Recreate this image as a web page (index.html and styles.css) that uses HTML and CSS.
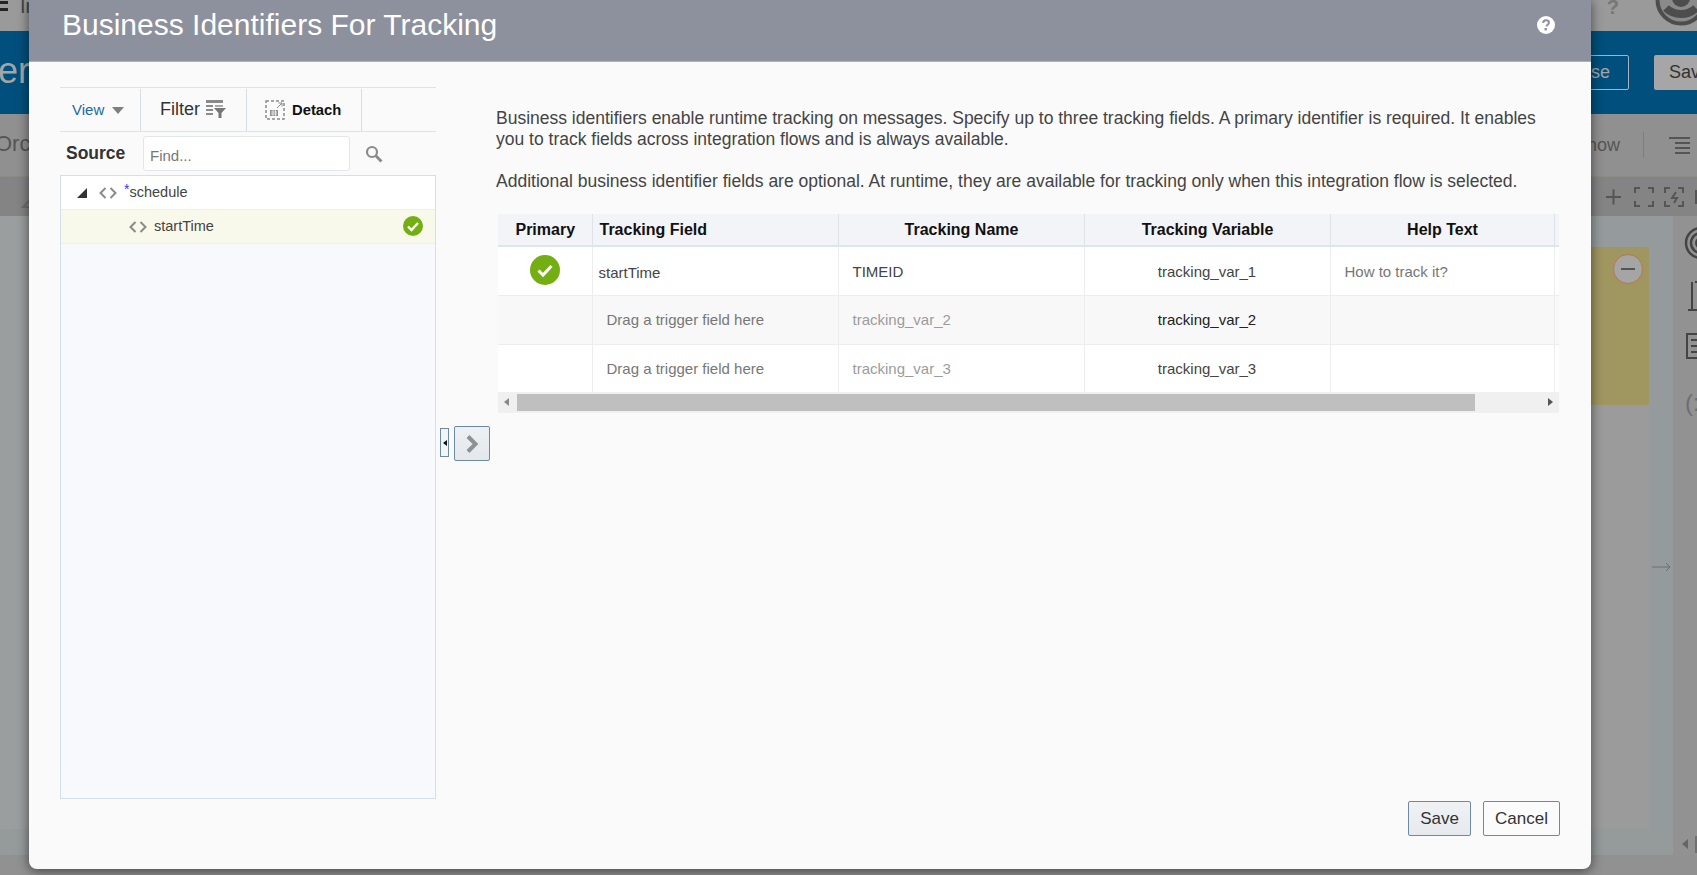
FILE: index.html
```html
<!DOCTYPE html>
<html lang="en">
<head>
<meta charset="utf-8">
<title>Business Identifiers For Tracking</title>
<link rel="stylesheet" href="styles.css">
</head>
<body>
<div class="app">
  <div class="topbar">
    <span class="burger"></span><span class="top-title">In</span>
    <span class="top-spacer"></span>
    <span class="top-help">?</span>
    <svg class="avatar" width="52" height="30" viewBox="0 0 52 30"><circle cx="26" cy="0" r="23.500" fill="#8a8a8a" stroke="#4d4d4d" stroke-width="4"/><circle cx="26" cy="-2" r="9" fill="#4d4d4d"/><path d="M11 8c4 4 9 6 15 6s11-2 15-6" fill="none" stroke="#4d4d4d" stroke-width="8"/></svg>
  </div>
  <div class="bluebar">
    <span class="blue-title">er</span>
    <span class="top-spacer"></span>
    <span class="btn-close">Close</span>
    <span class="btn-save">Save</span>
  </div>
  <div class="toolbar">
    <span class="orch">Orch</span>
    <span class="top-spacer"></span>
    <span class="show">Show</span>
    <span class="vsep"></span>
    <svg class="lines" width="21" height="17" viewBox="0 0 21 17"><path d="M0 1h21M6 6h15M6 11h15M6 16h15" stroke="#555" stroke-width="2" fill="none"/></svg>
  </div>
  <div class="subbar">
    <svg class="warn" width="20" height="24" viewBox="0 0 20 24"><path d="M22 2L2 22h20" fill="none" stroke="#6e6e6e" stroke-width="2"/></svg>
    <span class="top-spacer"></span>
    <svg class="zoom-tools" width="97" height="22" viewBox="0 0 97 22"><path d="M6 11h15M13.500 3.500v15" stroke="#555" stroke-width="2" fill="none"/><path d="M35 7V2h5M48 2h5v5M53 15v5h-5M40 20h-5v-5M65 7V2h5M78 2h5v5M83 15v5h-5M70 20h-5v-5M76 6l-4 6h5l-3 5" stroke="#555" stroke-width="2" fill="none"/><path d="M96 4v14" stroke="#555" stroke-width="2"/></svg>
  </div>
  <div class="canvas">
    <div class="card"><span class="collapse"><span class="collapse-bar"></span></span></div>
    <div class="rail"></div>
    <svg class="rail-icons" width="24" height="150" viewBox="0 0 24 150"><circle cx="28" cy="24" r="15" fill="none" stroke="#444" stroke-width="2.500"/><circle cx="28" cy="24" r="10" fill="none" stroke="#444" stroke-width="2.500"/><circle cx="28" cy="24" r="5" fill="none" stroke="#444" stroke-width="2"/><path d="M19 63v28M15 91h9M22 63h2" stroke="#444" stroke-width="2" fill="none"/><path d="M24 139H14v-24h10M18 121h6M18 127h6M18 133h6" stroke="#444" stroke-width="2" fill="none"/></svg>
    <span class="paren">(:</span>
    <svg class="arrow" width="20" height="10" viewBox="0 0 20 10"><path d="M0 5h18M14 1l4 4-4 4" stroke="#6e6e6e" stroke-width="1" fill="none"/></svg>
    <div class="canvas-foot"></div>
    <svg class="foot-arrow" width="14" height="14" viewBox="0 0 14 14"><path d="M9 2v10L3 7z" fill="#666"/></svg>
    <span class="foot-thumb"></span>
  </div>
</div>

<div class="modal">
  <header class="modal-head">
    <h1 class="modal-title">Business Identifiers For Tracking</h1>
    <svg class="help-icon" width="18" height="18" viewBox="0 0 18 18"><circle cx="9" cy="9" r="9" fill="#fff"/><path d="M6.200 7c0-1.700 1.200-2.700 2.900-2.700 1.600 0 2.800 1 2.800 2.400 0 2-2.400 2-2.400 3.800" fill="none" stroke="#8d909d" stroke-width="2"/><rect x="7.500" y="12" width="2.400" height="2.400" fill="#8d909d"/></svg>
  </header>
  <div class="modal-body">
    <aside class="source-pane">
      <div class="pane-toolbar">
        <div class="tb-cell tb-view"><span class="view-link">View</span><span class="caret"></span></div>
        <div class="tb-cell tb-filter"><span>Filter</span>
          <svg width="22" height="20" viewBox="0 0 22 20"><path d="M1 1h17v3H1zM1 6h7v2H1zM1 10h7v2H1zM1 14h7v2H1z" fill="#8a8a8a"/><path d="M10 6h8v2h-8z" fill="#a9a9a9"/><path d="M9 9h12l-4.500 5v5h-3v-5z" fill="#777"/></svg>
        </div>
        <div class="tb-cell tb-detach">
          <svg width="20" height="20" viewBox="0 0 20 20"><path d="M1 1h18v18H1z" fill="none" stroke="#8a8a8a" stroke-width="1.500" stroke-dasharray="3 2"/><path d="M5 10h8v6H5z" fill="#8f8f8f"/><path d="M6 12h6M6 14h6M8 10v6M10.500 10v6" stroke="#fafafa" stroke-width=".7"/><path d="M12 8l5-5M13.500 3H17v3.500" fill="none" stroke="#8a8a8a"/></svg>
          <span>Detach</span></div>
      </div>
      <div class="source-row">
        <span class="source-label">Source</span>
        <input class="find" type="text" placeholder="Find...">
        <svg class="search" width="18" height="18" viewBox="0 0 18 18"><circle cx="7" cy="7" r="5" fill="none" stroke="#8b8b8b" stroke-width="2.200"/><path d="M10.800 10.800l5.700 5.700" stroke="#8b8b8b" stroke-width="3"/></svg>
      </div>
      <div class="tree">
        <div class="tree-row tree-root">
          <svg class="expander" width="12" height="12" viewBox="0 0 12 12"><path d="M11 1v10H1z" fill="#333"/></svg>
          <svg class="code" width="18" height="12" viewBox="0 0 18 12"><path d="M6.500 1L1.500 6l5 5M11.500 1l5 5-5 5" fill="none" stroke="#8b8b8b" stroke-width="2"/></svg>
          <span class="tree-label"><sup class="req">*</sup>schedule</span>
        </div>
        <div class="tree-row tree-child">
          <svg class="code" width="18" height="12" viewBox="0 0 18 12"><path d="M6.500 1L1.500 6l5 5M11.500 1l5 5-5 5" fill="none" stroke="#8b8b8b" stroke-width="2"/></svg>
          <span class="tree-label">startTime</span>
          <svg class="check-small" width="20" height="20" viewBox="0 0 20 20"><circle cx="10" cy="10" r="10" fill="#73ae12"/><path d="M5 10.500l3.500 3.500L15 7" fill="none" stroke="#fff" stroke-width="2.400"/></svg>
        </div>
      </div>
    </aside>
    <div class="splitter">
      <span class="split-toggle"><span class="split-caret"></span></span>
      <span class="move-btn"><svg width="14" height="20" viewBox="0 0 14 20"><path d="M3 2.500L10.500 10 3 17.500" fill="none" stroke="#8b9196" stroke-width="4"/></svg></span>
    </div>
    <section class="main-pane">
      <p class="intro">Business identifiers enable runtime tracking on messages. Specify up to three tracking fields. A primary identifier is required. It enables you to track fields across integration flows and is always available.</p>
      <p class="intro">Additional business identifier fields are optional. At runtime, they are available for tracking only when this integration flow is selected.</p>
      <div class="grid-wrap">
        <table class="grid">
          <colgroup><col class="c1"><col class="c2"><col class="c3"><col class="c4"><col class="c5"><col class="c6"></colgroup>
          <thead>
            <tr><th>Primary</th><th class="left">Tracking Field</th><th>Tracking Name</th><th>Tracking Variable</th><th>Help Text</th><th class="tail"></th></tr>
          </thead>
          <tbody>
            <tr class="first">
              <td class="center"><svg class="check-big" width="30" height="30" viewBox="0 0 30 30"><circle cx="15" cy="15" r="15" fill="#73ae12"/><path d="M8.500 15.500l4.500 4.500 8.500-9" fill="none" stroke="#fff" stroke-width="3"/></svg></td>
              <td class="dark field-set">startTime</td>
              <td class="dark name-cell">TIMEID</td>
              <td class="dark var-cell">tracking_var_1</td>
              <td class="muted help-cell">How to track it?</td>
              <td class="tail"></td>
            </tr>
            <tr class="alt">
              <td></td>
              <td class="muted field-empty">Drag a trigger field here</td>
              <td class="faint name-cell">tracking_var_2</td>
              <td class="black var-cell">tracking_var_2</td>
              <td></td>
              <td class="tail"></td>
            </tr>
            <tr>
              <td></td>
              <td class="muted field-empty">Drag a trigger field here</td>
              <td class="faint name-cell">tracking_var_3</td>
              <td class="dark var-cell">tracking_var_3</td>
              <td></td>
              <td class="tail"></td>
            </tr>
          </tbody>
        </table>
        <div class="hscroll">
          <span class="sc-arrow sc-left"></span>
          <span class="sc-thumb"></span>
          <span class="sc-arrow sc-right"></span>
        </div>
      </div>
      <div class="actions">
        <button class="btn btn-primary" type="button">Save</button>
        <button class="btn" type="button">Cancel</button>
      </div>
    </section>
  </div>
</div>
</body>
</html>
```
FILE: styles.css
```css
* { box-sizing: border-box; }
html, body { margin: 0; height: 100%; overflow: hidden; }
body { font-family: "Liberation Sans", Arial, sans-serif; background: #909090; color: #333; }

.app { width: 1697px; height: 875px; display: flex; flex-direction: column; background: #919191; overflow: hidden; }
.top-spacer { flex: 1; }
.topbar { height: 31px; flex: none; display: flex; align-items: flex-start; background: #9a9a9a; color: #333; font-size: 20px; overflow: hidden; }
.burger { width: 8px; height: 10px; margin-top: 1px; border-top: 3px solid #222; border-bottom: 3px solid #222; }
.top-title { margin-left: 12px; margin-top: -5px; color: #444; }
.top-help { margin-right: 36px; margin-top: -4px; font-weight: bold; color: #777; font-size: 20px; }
.avatar { flex: none; margin-right: -10px; }

.bluebar { height: 83px; flex: none; display: flex; align-items: center; background: #004f7c; color: #aaa; overflow: hidden; }
.blue-title { font-size: 36px; margin-left: -2px; color: #a5a5a5; margin-top: -4px; }
.btn-close { flex: none; width: 84px; margin-right: 25px; height: 35px; border: 1px solid #a5b5c0; border-radius: 2px; color: #a4a4a4; font-size: 18px; display: flex; align-items: center; justify-content: center; margin-top: -1px; }
.btn-save { flex: none; width: 60px; margin-right: -17px; height: 35px; border-radius: 2px; background: #a6a6a6; color: #333; font-size: 18px; padding: 7px 0 0 15px; margin-top: -1px; overflow: hidden; white-space: nowrap; }

.toolbar { height: 62px; flex: none; display: flex; align-items: center; background: #909090; color: #555; overflow: hidden; }
.orch { margin-left: -5px; margin-top: -2px; font-size: 22px; }
.show { font-size: 18px; margin-right: 23px; }
.vsep { width: 1px; height: 26px; background: #7d7d7d; margin-right: 25px; }
.lines { margin-right: 7px; }

.subbar { height: 40px; flex: none; display: flex; align-items: center; background: #848484; border-top: 1px solid #8b8b80; }
.warn { margin-left: 21px; }
.zoom-tools { margin-left: auto; }

.canvas { position: relative; height: 639px; flex: none; background: #9b9e9e; }
.card { position: absolute; left: 1500px; top: 31px; width: 149px; height: 158px; background: #a09660; border-radius: 2px; z-index: 1; }
.collapse { position: absolute; left: 113px; top: 7px; width: 30px; height: 30px; border-radius: 50%; background: #a5a5a5; border: 1px solid #b5774e; display: flex; align-items: center; justify-content: center; }
.collapse-bar { width: 14px; height: 2px; background: #555; }
.rail { position: absolute; left: 1673px; top: 0; width: 24px; bottom: 0; background: #929292; }
.canvas::before { content: ""; position: absolute; left: 1594px; top: 0; bottom: 0; width: 79px; background: #959b9c; }
.canvas::after { content: ""; position: absolute; left: 1594px; top: 189px; bottom: 0; width: 55px; background: #9b9b9b; }
.rail-icons { position: absolute; left: 1673px; top: 3px; }
.paren { position: absolute; left: 1685px; top: 173px; font-size: 24px; color: #6a6f76; z-index: 1; }
.arrow { position: absolute; left: 1652px; top: 346px; z-index: 1; }
.canvas-foot { position: absolute; left: 0; right: 24px; top: 613px; height: 26px; background: #959a9a; z-index: 1; }
.foot-arrow { position: absolute; left: 1679px; top: 621px; z-index: 2; }
.foot-thumb { position: absolute; left: 1695px; top: 620px; width: 2px; height: 17px; background: #707070; z-index: 2; }

.modal { position: absolute; z-index: 5; left: 29px; top: -1px; width: 1562px; height: 870px; border-radius: 0 0 8px 8px; background: #fafafa; box-shadow: 0 2px 12px rgba(0, 0, 0, .55); display: flex; flex-direction: column; }
.modal-head { height: 63px; background: #8d909d; display: flex; align-items: center; justify-content: space-between; padding: 0 36px 0 33px; border-bottom: 1px solid #a7b4c0; }
.modal-title { margin: -11px 0 0; font-size: 30px; font-weight: normal; color: #fff; }
.help-icon { margin-top: -11px; }

.modal-body { flex: 1; display: flex; padding: 25px 32px 0 31px; min-height: 0; }
.source-pane { width: 376px; display: flex; flex-direction: column; height: 712px; }
.pane-toolbar { height: 45px; display: flex; border-top: 1px solid #dce3ea; border-bottom: 1px solid #dce3ea; }
.tb-cell { display: flex; align-items: center; border-right: 1px solid #d6dfe8; margin-top: 1px; }
.tb-view { width: 81px; padding-left: 12px; gap: 8px; font-size: 15px; padding-bottom: 2px; }
.view-link { color: #166aa8; }
.caret { width: 0; height: 0; border-left: 6px solid transparent; border-right: 6px solid transparent; border-top: 7px solid #7f7f7f; margin-top: 3px; }
.tb-filter { width: 106px; padding-left: 19px; gap: 5px; font-size: 18px; color: #333; padding-bottom: 2px; }
.tb-detach { width: 115px; padding-left: 18px; gap: 7px; font-size: 14.800px; font-weight: bold; color: #111; }
.source-row { height: 43px; display: flex; align-items: center; }
.source-label { margin-left: 6px; font-size: 17.500px; font-weight: bold; color: #333; width: 77px; flex: none; }
.find { width: 207px; height: 35px; border: 1px solid #e2e7ec; border-radius: 3px; background: #fff; padding: 3px 6px 0; font: 15px "Liberation Sans", Arial, sans-serif; color: #333; outline: none; }
.find::placeholder { color: #777; opacity: 1; }
.search { margin-left: 15px; }
.tree { flex: 1; border: 1px solid #d3dfe9; background: #f7f9fd; }
.tree-row { height: 34px; display: flex; align-items: center; font-size: 14.500px; color: #444; border-bottom: 1px solid #ecf0f3; }
.tree-root { background: #fff; padding-left: 15px; }
.tree-child { background: #f8f9ea; padding-left: 68px; padding-right: 12px; }
.expander { margin-right: 11px; }
.code { margin-right: 7px; }
.tree-label { flex: 1; margin-top: -2px; }
.check-small { margin-top: -2px; }
.req { color: #3333ff; font-size: 14px; line-height: 0; vertical-align: 3px; }

.splitter { width: 60px; position: relative; flex: none; }
.split-toggle { position: absolute; left: 4px; top: 341px; width: 9px; height: 29px; border: 1px solid #6c8aa6; background: #f2f4f5; display: flex; align-items: center; justify-content: center; }
.split-caret { width: 0; height: 0; border-top: 3.500px solid transparent; border-bottom: 3.500px solid transparent; border-right: 4px solid #111; }
.move-btn { position: absolute; left: 18px; top: 339px; width: 36px; height: 35px; border: 1px solid #6c8aa6; border-radius: 2px; background: linear-gradient(#eef1f3, #e4e8ea); display: flex; align-items: center; justify-content: center; }

.main-pane { flex: 1; min-width: 0; display: flex; flex-direction: column; padding-top: 21px; }
.intro { margin: 0 0 20.500px; font-size: 17.500px; line-height: 21px; color: #444; padding-right: 14px; }
.grid-wrap { width: 1061px; margin-left: 2px; margin-top: 2px; }
.grid { border-collapse: collapse; table-layout: fixed; width: 1061px; background: #fff; font-size: 15px; }
.c1 { width: 94px; } .c2 { width: 246px; } .c3 { width: 246px; } .c4 { width: 246px; } .c5 { width: 224px; } .c6 { width: 5px; }
.grid th { height: 32px; padding: 0 0 0 1px; font-size: 16px; font-weight: bold; color: #111; background: #f2f4f8; border-right: 1px solid #dde3e8; border-bottom: 2px solid #dde6ec; text-align: center; }
.grid th.left { text-align: left; padding-left: 7px; }
.grid td { height: 49px; padding: 0; border-right: 1px solid #ebedef; border-bottom: 1px solid #ebedef; }
.grid tr:last-child td { height: 48px; border-bottom: 0; }
.grid .tail { border-right: 0; }
.alt td { background: #f8f8f8; }
.first td { padding-top: 1px; }
.center { text-align: center; }
.check-big { display: block; margin: 0 auto 3px; }
.dark { color: #444; }
.black { color: #222; }
.muted { color: #777; }
.faint { color: #9c9c9c; }
.grid .field-set { padding-left: 6px; padding-top: 3px; }
.grid .field-empty { padding-left: 14px; }
.grid .name-cell { padding-left: 14px; }
.var-cell { text-align: center; }
.grid .help-cell { padding-left: 14px; }
.hscroll { height: 21px; background: #f0f0f0; display: flex; align-items: center; position: relative; }
.sc-thumb { position: absolute; left: 19px; top: 2px; width: 958px; height: 17px; background: #bfbfbf; }
.sc-arrow { position: absolute; top: 6px; width: 0; height: 0; border-top: 4.500px solid transparent; border-bottom: 4.500px solid transparent; }
.sc-left { left: 6px; border-right: 5px solid #8a8a8a; }
.sc-right { right: 6px; border-left: 5px solid #555; }

.actions { margin-top: auto; margin-right: -1px; display: flex; justify-content: flex-end; gap: 12px; padding-bottom: 33px; }
.btn { height: 35px; padding: 0; border: 1px solid #6c8aa6; border-radius: 2px; background: #fbfbfb; font: 17px "Liberation Sans", Arial, sans-serif; color: #333; width: 77px; }
.btn-primary { width: 63px; background: linear-gradient(#f0f2f4, #e6eaed); }
```
